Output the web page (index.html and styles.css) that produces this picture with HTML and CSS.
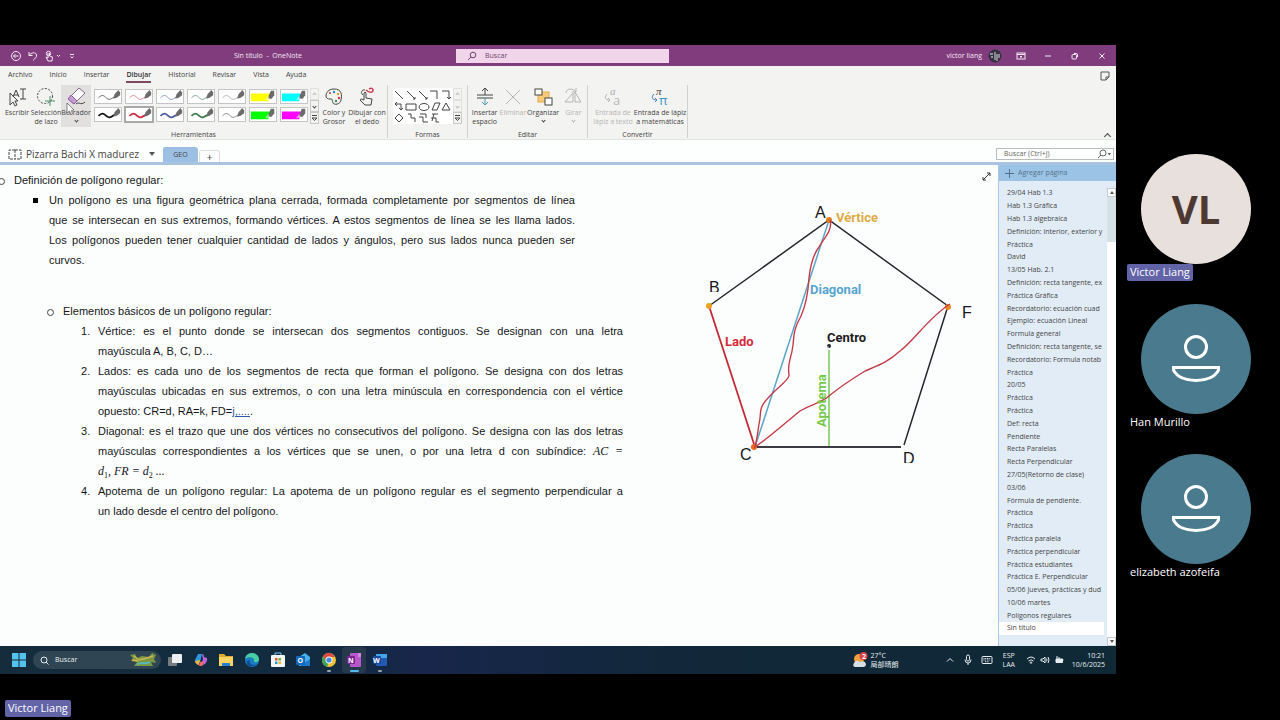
FILE: index.html
```html
<!DOCTYPE html>
<html lang="es">
<head>
<meta charset="utf-8">
<title>Sin título - OneNote</title>
<link rel="stylesheet" href="styles.css">
</head>
<body>
<svg class="defs" aria-hidden="true">
  <symbol id="wave" viewBox="0 0 28 15"><path d="M3 9C7 5 9 6 12 9S17 11 21 8" fill="none" stroke="currentColor"/><path d="M20 10L21.500 5L26 0L28 3V6L24 9Z" fill="#6b6b6b" stroke="none"/></symbol>
  <symbol id="marker" viewBox="0 0 28 15"><path d="M0 4H22L20 13H0Z" fill="currentColor"/><path d="M20 8L23 1H27V6L24 10H20Z" fill="#6b6b6b"/><path d="M16 12L20 7L22 11Z" fill="#fff" opacity=".5"/></symbol>
  <symbol id="person" viewBox="0 0 50 50"><circle cx="25" cy="13" r="10.500"/><path d="M2.500 33.500H47.500V36C44 43 35 46.500 25 46.500S6 43 2.500 36Z"/></symbol>
</svg>
<div class="call">
<main class="shared">
  <header class="titlebar">
    <div class="quick">
      <button aria-label="Atrás"><svg width="12" height="12" viewBox="0 0 12 12"><circle cx="6" cy="6" r="4.500"/><path d="M8.500 6H3.500M5.500 4L3.500 6L5.500 8"/></svg></button>
      <button aria-label="Deshacer"><svg width="12" height="12" viewBox="0 0 12 12"><path d="M2 2V5.500H5.500M2 5.500C4 2.500 9 1.500 9.500 5C10 7 8 8.500 6 10.500"/></svg></button>
      <button aria-label="Modo táctil"><svg width="18" height="12" viewBox="0 0 18 12"><circle cx="4.500" cy="3.500" r="2.200"/><path d="M4 3V8L2 7L4 11H8L8.500 7L5.500 6V3"/><path d="M13 5L14.500 6.500L16 5"/></svg></button>
      <button aria-label="Personalizar"><svg width="10" height="12" viewBox="0 0 10 12"><path d="M3 4.500H7M3.500 6.500L5 8L6.500 6.500"/></svg></button>
    </div>
    <h1 class="wintitle">Sin título &nbsp;-&nbsp; OneNote</h1>
    <label class="winsearch"><svg width="10" height="10" viewBox="0 0 10 10"><circle cx="6" cy="4" r="2.800"/><path d="M4 6L1 9"/></svg><input type="search" aria-label="Buscar" placeholder="Buscar"></label>
    <div class="account"><span>victor liang</span><svg class="face" width="14" height="14" viewBox="0 0 14 14"><circle cx="7" cy="7" r="6.500" fill="#333142"/><path d="M2 5H5M3 8H5M7 3V11M9 5V12M11 5V9" stroke="#b8b3bc" stroke-width="1.300"/></svg></div>
    <div class="winbuttons">
      <button aria-label="Cinta"><svg width="10" height="10" viewBox="0 0 10 10"><rect x="1" y="2" width="8" height="6"/><path d="M1 3.500H9M5 7V5M4 6L5 5L6 6"/></svg></button>
      <button aria-label="Minimizar"><svg width="10" height="10" viewBox="0 0 10 10"><path d="M2 5H8"/></svg></button>
      <button aria-label="Restaurar"><svg width="10" height="10" viewBox="0 0 10 10"><rect x="2" y="3.500" width="4.500" height="4.500" rx="1"/><path d="M4 2.500H6.500Q7.500 2.500 7.500 3.500V6"/></svg></button>
      <button aria-label="Cerrar"><svg width="10" height="10" viewBox="0 0 10 10"><path d="M2.500 2.500L7.500 7.500M7.500 2.500L2.500 7.500"/></svg></button>
    </div>
  </header>
  <section class="ribbon">
    <nav class="tabs">
      <button>Archivo</button><button>Inicio</button><button>Insertar</button><button class="on">Dibujar</button><button>Historial</button><button>Revisar</button><button>Vista</button><button>Ayuda</button>
      <button class="feed" aria-label="Notas"><svg width="10" height="10" viewBox="0 0 10 10"><path d="M1 1H9V6L6 9H1ZM6 9V6H9"/></svg></button>
    </nav>
    <div class="groups">
      <div class="group tools">
        <div class="items">
          <button class="tool w28"><svg width="20" height="20" viewBox="0 0 20 20"><path d="M3 6V18L6 15L8 19L10 18L8 14H11Z"/><path d="M6 10L9 3L12 10M7 8H11M13 2H19M16 2V12M13 12H19"/></svg>Escribir</button>
          <button class="tool w30"><svg width="20" height="20" viewBox="0 0 20 20"><circle cx="9" cy="9" r="7.500" stroke-dasharray="2 1.500"/><path d="M14 9V19M9 14H19" stroke="#4d9067"/></svg>Selección<br>de lazo</button>
          <button class="tool w30 hot"><svg width="20" height="20" viewBox="0 0 20 20"><path d="M2 12L13 1L19 6L8 17Z" fill="#fff" stroke="#80668a"/><path d="M2 12L5 8L11 14L8 17Z" fill="#c69bd3" stroke="#9461a5"/><path d="M10 17C13 14 14 19 19 15"/></svg>Borrador<i class="down"></i></button>
          <div class="gallery pens">
            <button aria-label="Lápiz negro fino" class="pen k1"><svg><use href="#wave"/></svg></button><button aria-label="Lápiz rojo fino" class="pen r1"><svg><use href="#wave"/></svg></button><button aria-label="Lápiz azul fino" class="pen b1"><svg><use href="#wave"/></svg></button><button aria-label="Lápiz verde fino" class="pen g1"><svg><use href="#wave"/></svg></button><button aria-label="Lápiz gris fino" class="pen n1"><svg><use href="#wave"/></svg></button><button aria-label="Resaltador amarillo" class="pen hl yy"><svg><use href="#marker"/></svg></button><button aria-label="Resaltador cian" class="pen hl cc"><svg><use href="#marker"/></svg></button>
            <button aria-label="Lápiz negro" class="pen thick k2"><svg><use href="#wave"/></svg></button><button aria-label="Lápiz rojo" class="pen thick r2 chosen"><svg><use href="#wave"/></svg></button><button aria-label="Lápiz azul" class="pen thick b2"><svg><use href="#wave"/></svg></button><button aria-label="Lápiz verde" class="pen thick g2"><svg><use href="#wave"/></svg></button><button aria-label="Lápiz gris" class="pen n2"><svg><use href="#wave"/></svg></button><button aria-label="Resaltador verde" class="pen hl gg"><svg><use href="#marker"/></svg></button><button aria-label="Resaltador magenta" class="pen hl mm"><svg><use href="#marker"/></svg></button>
          </div>
          <div class="spin"><button class="off" aria-label="Anterior"><i class="up"></i></button><button aria-label="Siguiente"><i class="down"></i></button><button aria-label="Más lápices"><svg width="7" height="8" viewBox="0 0 7 8"><path d="M1 1.500H6M1 4H6L3.500 6.500Z"/></svg></button></div>
          <button class="tool w30"><svg width="20" height="20" viewBox="0 0 20 20"><path d="M10 2C4 2 2 6 2 9S5 12 7 12S8 14 9 16S16 18 17 13S18 2 10 2Z"/><circle cx="6" cy="6" r="1" fill="#d13438" stroke="none"/><circle cx="10" cy="5" r="1.200" fill="#2b88d8" stroke="none"/><circle cx="14" cy="7" r="1.200" fill="#e0a030" stroke="none"/><circle cx="15" cy="11" r="1.200" fill="#d13438" stroke="none"/><circle cx="12" cy="14" r="1.200" fill="#3a8f5c" stroke="none"/></svg>Color y<br>Grosor</button>
          <button class="tool w36"><svg width="20" height="20" viewBox="0 0 20 20"><path d="M7 13V6Q8 4 9 6V11L15 12L14 18H8L3 13Q4 11 7 13M6 8C3 6 5 2 8 3"/><path d="M9 3C12 6 16 6 16 3C16 1 14 1 12 2" stroke="#d04052" stroke-width="1.500"/></svg>Dibujar con<br>el dedo</button>
        </div>
        <h2>Herramientas</h2>
      </div>
      <div class="group shapes">
        <div class="items">
          <button class="gallery shapebox" aria-label="Formas"><svg width="60" height="36" viewBox="0 0 60 36"><path d="M2 3L10 11M14 3L22 11M26 3L34 11M37 3H44V11M49 3H56V11M2 16H8V22M13 16H23V22H13ZM39 22L42 15H47L44 22ZM49 22L53 15L57 22ZM2 30L6 26L10 30L6 34ZM15 26H18V30H22V34M27 26H33V30M26 29H30V34H35M39 26H45M41 26L39 33M38 30H43V34H46"/><ellipse cx="31" cy="19" rx="5" ry="3.500"/><path d="M20 11H22V9M32 11H34V9M54 9L56 11L58 9M4 14L2 16L4 18M6 20L8 22L10 20" /></svg></button>
          <div class="spin"><button class="off" aria-label="Anterior"><i class="up"></i></button><button class="off" aria-label="Siguiente"><i class="down"></i></button><button aria-label="Más formas"><svg width="7" height="8" viewBox="0 0 7 8"><path d="M1 1.500H6M1 4H6L3.500 6.500Z"/></svg></button></div>
        </div>
        <h2>Formas</h2>
      </div>
      <div class="group edit">
        <div class="items">
          <button class="tool w28"><svg width="20" height="20" viewBox="0 0 20 20"><path d="M2 8H18M2 11H18M10 8V1M7 4L10 1L13 4"/><path d="M10 11V18M7 15L10 18L13 15" stroke="#4697a9"/></svg>Insertar<br>espacio</button>
          <button class="tool w28" disabled><svg width="20" height="20" viewBox="0 0 20 20"><path d="M3 3L17 17M17 3L3 17"/></svg>Eliminar</button>
          <button class="tool w32"><svg width="20" height="20" viewBox="0 0 20 20"><rect x="5" y="5" width="11" height="10" fill="#f7cb79" stroke="#e3aa45"/><rect x="2" y="2" width="7" height="6" fill="#fff"/><rect x="12" y="11" width="7" height="7" fill="#fff"/></svg>Organizar<i class="down"></i></button>
          <button class="tool w28" disabled><svg width="20" height="20" viewBox="0 0 20 20"><path d="M2 15H10V6ZM12 15V5L18 15ZM3 6C3 1 10 1 13 5M13 1V5H9"/></svg>Girar<i class="down"></i></button>
        </div>
        <h2>Editar</h2>
      </div>
      <div class="group convert">
        <div class="items">
          <button class="tool w44" disabled><svg width="20" height="20" viewBox="0 0 20 20"><text x="7" y="8" class="ia">a</text><text x="10" y="18" class="ib">a</text><path d="M4 7C1 10 2 13 7 13M5 11L7 13L5 15"/></svg>Entrada de<br>lápiz a texto</button>
          <button class="tool w50"><svg width="20" height="20" viewBox="0 0 20 20"><text x="6" y="8" class="ia dark">π</text><text x="9" y="18" class="ib blue">π</text><path d="M4 7C1 10 2 13 7 13M5 11L7 13L5 15" stroke="#4b86b8"/></svg>Entrada de lápiz<br>a matemáticas</button>
        </div>
        <h2>Convertir</h2>
      </div>
      <button class="collapse" aria-label="Contraer la cinta"><i class="up"></i></button>
      <svg class="pointer" width="9" height="14" viewBox="0 0 9 14"><path d="M1 1V11L3.500 9L5 12.500L6.500 12L5.500 8.500L8 8Z" fill="#fff" stroke="#555" stroke-width=".7"/></svg>
    </div>
  </section>
  <div class="bookbar">
    <button class="book"><svg width="14" height="12" viewBox="0 0 14 12"><path d="M7 2V11M7 2H1V11H7M7 2H13V11H7" stroke-dasharray="3 1"/></svg>Pizarra Bachi X madurez<i class="caret"></i></button>
    <button class="sect">GEO</button><button class="newsect" aria-label="Nueva sección">+</button>
    <label class="find"><input type="search" aria-label="Buscar (Ctrl+J)" placeholder="Buscar (Ctrl+J)"><svg width="14" height="10" viewBox="0 0 14 10"><circle cx="6" cy="4" r="3"/><path d="M4 6L1 9"/><path d="M10.500 4H14L12.300 6.500Z" fill="currentColor" stroke="none"/></svg></label>
  </div>
  <div class="work">
    <article class="page">
      <div class="doc">
        <ul class="lv1"><li>Definición de polígono regular:
          <ul class="lv2"><li>
            <span class="ln">Un polígono es una figura geométrica plana cerrada, formada completamente por segmentos de línea</span>
            <span class="ln">que se intersecan en sus extremos, formando vértices. A estos segmentos de línea se les llama lados.</span>
            <span class="ln">Los polígonos pueden tener cualquier cantidad de lados y ángulos, pero sus lados nunca pueden ser</span>
            <span>curvos.</span></li></ul>
        </li></ul>
        <ul class="lv3"><li>Elementos básicos de un polígono regular:
          <ol>
            <li><span class="ln">Vértice: es el punto donde se intersecan dos segmentos contiguos. Se designan con una letra</span><span>mayúscula A, B, C, D…</span></li>
            <li><span class="ln">Lados: es cada uno de los segmentos de recta que forman el polígono. Se designa con dos letras</span><span class="ln">mayúsculas ubicadas en sus extremos, o con una letra minúscula en correspondencia con el vértice</span><span>opuesto: CR=d, RA=k, FD=<u>j,....</u>.</span></li>
            <li><span class="ln">Diagonal: es el trazo que une dos vértices no consecutivos del polígono. Se designa con las dos letras</span><span class="ln">mayúsculas correspondientes a los vértices que se unen, o por una letra d con subíndice: <em>AC =</em></span><span><em>d<sub>1</sub>, FR = d<sub>2</sub> ...</em></span></li>
            <li><span class="ln">Apotema de un polígono regular: La apotema de un polígono regular es el segmento perpendicular a</span><span>un lado desde el centro del polígono.</span></li>
          </ol>
        </li></ul>
      </div>
      <svg class="figure" width="300" height="290" viewBox="690 190 300 290">
        <path d="M709 306L829 220L948 306L904 445" fill="none" stroke="#26262c" stroke-width="1.500"/>
        <path d="M755 447H901" stroke="#3c3a42" stroke-width="2"/>
        <path d="M829 220L755 447" stroke="#5ba5c8" stroke-width="1.500"/>
        <path d="M709 306L755 447" stroke="#c22a37" stroke-width="1.800"/>
        <path d="M829 350V446" stroke="#79c653" stroke-width="1.500"/>
        <circle cx="829" cy="220" r="3" fill="#dd7f21"/><circle cx="709" cy="306" r="3" fill="#eda321"/><circle cx="948" cy="307" r="3" fill="#e78b22"/><circle cx="754" cy="447" r="3" fill="#ef6a20"/>
        <circle cx="829" cy="346" r="2" fill="#222"/><circle cx="828" cy="347" r=".7" fill="#fff"/>
        <path d="M830 220C833 230 824 238 819 247C812 256 810 269 809 278C808 295 806 305 801 316C793 330 794 337 793 345C791 362 787 361 789 375C790 379 777 388 769 397C757 409 762 413 759 424C758 431 757 439 755 447C766 440 784 424 800 411C814 403 821 403 829 396C841 386 852 379 865 371C879 365 888 362 900 351C912 343 929 317 950 304" fill="none" stroke="#c43b48" stroke-width="1.400"/>
        <g class="vx"><text x="815" y="218">A</text><text x="709" y="293">B</text><text x="962" y="318">F</text><text x="740" y="460">C</text><text x="903" y="464">D</text></g>
        <path d="M708 293H722M902 464H917" stroke="#fff" stroke-width="2"/>
        <g class="lb"><text x="836" y="222" fill="#deaa43">Vértice</text><text x="810" y="294" fill="#57a4d0">Diagonal</text><text x="725" y="346" fill="#d42b3c">Lado</text><text x="827" y="342" fill="#1c1c22">Centro</text><text transform="translate(826 427) rotate(-90)" fill="#76c848">Apotema</text></g>
      </svg>
      <button class="expand" aria-label="Vista de página completa"><svg width="9" height="9" viewBox="0 0 9 9"><path d="M1 8L8 1M5 1H8V4M1 5V8H4"/></svg></button>
    </article>
    <aside class="pages">
      <button class="add"><svg width="9" height="9" viewBox="0 0 9 9"><path d="M4.500 0V9M0 4.500H9"/></svg>Agregar página</button>
      <div class="listwrap">
        <ul class="list">
          <li>29/04 Hab 1.3</li><li>Hab 1.3 Gráfica</li><li>Hab 1.3 algebraica</li><li>Definición: interior, exterior y</li><li>Práctica</li><li>David</li><li>13/05 Hab. 2.1</li><li>Definición: recta tangente, ex</li><li>Práctica Gráfica</li><li>Recordatorio: ecuación cuad</li><li>Ejemplo: ecuación Lineal</li><li>Formula general</li><li>Definición: recta tangente, se</li><li>Recordatorio: Formula notab</li><li>Práctica</li><li>20/05</li><li>Práctica</li><li>Práctica</li><li>Def: recta</li><li>Pendiente</li><li>Recta Paralelas</li><li>Recta Perpendicular</li><li>27/05(Retorno de clase)</li><li>03/06</li><li>Fórmula de pendiente.</li><li>Práctica</li><li>Práctica</li><li>Práctica paralela</li><li>Práctica perpendicular</li><li>Práctica estudiantes</li><li>Práctica E. Perpendicular</li><li>05/06 Jueves, prácticas y dud</li><li>10/06 martes</li><li>Polígonos regulares</li><li class="cur">Sin título</li>
        </ul>
        <div class="scroll"><button aria-label="Subir"><i class="caret flip"></i></button><div class="thumb"></div><button aria-label="Bajar"><i class="caret"></i></button></div>
      </div>
    </aside>
  </div>
  <footer class="taskbar">
    <button class="start" aria-label="Inicio"><svg width="14" height="14" viewBox="0 0 14 14"><path d="M0 0H6.500V6.500H0ZM7.500 0H14V6.500H7.500ZM0 7.500H6.500V14H0ZM7.500 7.500H14V14H7.500Z" fill="#54c1ee" stroke="none"/></svg></button>
    <label class="tasksearch"><svg width="9" height="9" viewBox="0 0 9 9"><circle cx="4" cy="4" r="3"/><path d="M6 6L8.500 8.500"/></svg><input type="search" aria-label="Buscar en Windows" placeholder="Buscar"><svg class="art" width="28" height="14" viewBox="0 0 28 14"><path d="M1 2L6 1L8 5L13 3L20 4L23 0L27 2L25 6L27 10L22 9L24 13H5L8 9L2 8L4 5Z" fill="#799744"/><path d="M5 3L10 7L18 5L24 3M3 7L9 8" stroke="#d1b650" stroke-width="1.500"/><path d="M8 12C12 7 15 13 21 9M12 10H19" stroke="#53bcc5" stroke-width="1.500"/></svg></label>
    <div class="apps">
      <button aria-label="Vista de tareas"><svg width="16" height="16" viewBox="0 0 16 16"><rect x="1" y="5" width="9" height="9" rx="1" fill="#777d82"/><rect x="5" y="2" width="10" height="9" rx="1" fill="#eceff1"/></svg></button>
      <button aria-label="Copilot"><svg width="16" height="16" viewBox="0 0 16 16"><path d="M5 2H9L7 10L5 12Q1 11 2 8Z" fill="#2f97e0"/><path d="M9 2Q11 2 11 5L14 6Q15 8 12 12L8 14L10 7Z" fill="#bd62d8"/><path d="M2 9L7 8L6 13Q3 13 2 9Z" fill="#e8b443"/><path d="M7 10L11 9L9 14H6Z" fill="#ef6a61"/></svg></button>
      <button aria-label="Explorador"><svg width="16" height="16" viewBox="0 0 16 16"><path d="M1 2H6L8 4H15V14H1Z" fill="#e2a92f"/><path d="M1 5H15V14H1Z" fill="#fdd462"/><path d="M4 11H12V14H4Z" fill="#2583cc"/></svg></button>
      <button aria-label="Edge"><svg width="16" height="16" viewBox="0 0 16 16"><circle cx="8" cy="8" r="7" fill="#187dc5"/><path d="M1 7C2-1 14-1 15 7C15 11 10 11 10 9C11 5 4 4 1 7Z" fill="#47cda0"/><path d="M6 8C5 13 10 14 13 12C9 17 1 14 3 9Z" fill="#124f94"/></svg></button>
      <button aria-label="Tienda"><svg width="16" height="16" viewBox="0 0 16 16"><path d="M5 4V1H11V4" stroke="#7fc4f0" fill="none"/><rect x="1" y="3" width="14" height="12" rx="1" fill="#f2f4f5"/><path d="M5 6H7.500V8.500H5Z" fill="#e95427"/><path d="M8.500 6H11V8.500H8.500Z" fill="#75ae37"/><path d="M5 9.500H7.500V12H5Z" fill="#2699dd"/><path d="M8.500 9.500H11V12H8.500Z" fill="#efb830"/></svg></button>
      <button aria-label="Outlook"><svg width="16" height="16" viewBox="0 0 16 16"><path d="M4 5L10 1L15 5V14H4Z" fill="#45b4ec"/><path d="M5 14L15 7V14Z" fill="#1d78ca"/><rect x="1" y="4" width="9" height="9" rx="1" fill="#1368b8"/><text x="2.500" y="11" class="il">O</text></svg></button>
      <button class="run" aria-label="Chrome"><svg width="16" height="16" viewBox="0 0 16 16"><circle cx="8" cy="8" r="7" fill="#edc139"/><path d="M2 4Q8-3 14 5H8L5 9Z" fill="#db4b3f"/><path d="M2 4L7 12L6 15C1 13 0 8 2 4Z" fill="#3aa45b"/><circle cx="8" cy="8" r="3.500" fill="#fff"/><circle cx="8" cy="8" r="2.600" fill="#4187e8"/></svg></button>
      <button class="run active" aria-label="OneNote"><svg width="16" height="16" viewBox="0 0 16 16"><rect x="4" y="1" width="11" height="14" rx="1" fill="#b757cc"/><path d="M12 1H15V5H12Z" fill="#d884e5"/><rect x="1" y="4" width="8" height="8" rx="1" fill="#7b238f"/><text x="2" y="11" class="il">N</text></svg></button>
      <button class="run" aria-label="Word"><svg width="16" height="16" viewBox="0 0 16 16"><rect x="4" y="2" width="11" height="12" rx="1" fill="#225ab3"/><path d="M4 2H15V6H4Z" fill="#48a4e8"/><rect x="1" y="4" width="8" height="8" rx="1" fill="#174a9c"/><text x="1" y="11" class="il">W</text></svg></button>
    </div>
    <div class="weather"><svg width="16" height="18" viewBox="0 0 16 18"><circle cx="7" cy="8" r="5" fill="#f0a13a"/><path d="M3 16Q0 15 2 12Q4 8 8 11Q13 9 14 13Q14 16 11 16Z" fill="#d5dfe8"/><circle cx="11.500" cy="5" r="4" fill="#d8424e"/><text x="10" y="7.500" class="il">2</text></svg><span>27°C<br>局部晴朗</span></div>
    <div class="tray">
      <svg width="10" height="10" viewBox="0 0 10 10"><path d="M2 6.500L5 3.500L8 6.500"/></svg>
      <svg width="10" height="12" viewBox="0 0 10 12"><rect x="3.500" y="1" width="3" height="6" rx="1.500"/><path d="M2 5.500Q2 9 5 9T8 5.500M5 9V11"/></svg>
      <svg width="12" height="10" viewBox="0 0 12 10"><rect x="1" y="1.500" width="10" height="7" rx="1"/><path d="M2.500 3.500H9.500M2.500 5H9.500M4 6.800H8" stroke-dasharray="1 .7"/></svg>
    </div>
    <span class="lang">ESP<br>LAA</span>
    <div class="net">
      <svg width="10" height="10" viewBox="0 0 10 10"><path d="M1 4Q5 0 9 4M2.500 6Q5 3.500 7.500 6M4 7.500Q5 6.500 6 7.500L5 8.500Z"/></svg>
      <svg width="10" height="10" viewBox="0 0 10 10"><path d="M1 4H3L5 2V8L3 6H1ZM6.500 3.500Q7.500 5 6.500 6.500M8 2Q10 5 8 8"/></svg>
      <svg width="10" height="10" viewBox="0 0 10 10"><path d="M2 4H8.500V7.500H2ZM3 1V4M5 2V4M8.500 5H9.500" fill="#e6edf1"/></svg>
    </div>
    <time class="clock">10:21<br>10/6/2025</time>
  </footer>
  <div class="presenter"><span class="badge">Victor Liang</span></div>
</main>
<aside class="people">
  <figure><div class="avatar vl">VL</div><figcaption><span class="badge">Victor Liang</span></figcaption></figure>
  <figure><div class="avatar"><svg width="50" height="50"><use href="#person"/></svg></div><figcaption><span class="plain">Han Murillo</span></figcaption></figure>
  <figure><div class="avatar"><svg width="50" height="50"><use href="#person"/></svg></div><figcaption><span class="plain">elizabeth azofeifa</span></figcaption></figure>
</aside>
</div>
</body>
</html>
```
FILE: styles.css
```css
* { box-sizing: border-box; }
body { margin: 0; background: #000; font: 7px/10px "Open Sans", "Noto Sans", "Noto Sans CJK SC", sans-serif; color: #444; }
button, input { font: inherit; color: inherit; background: none; border: 0; padding: 0; margin: 0; min-width: 0; }
input { outline: 0; }
input::placeholder { color: inherit; opacity: 1; }
h1, h2, ul, ol, figure { margin: 0; padding: 0; font: inherit; list-style: none; }
svg { fill: none; stroke: currentColor; stroke-width: 1; flex: none; overflow: visible; }
svg text { stroke: none; }
button svg, label svg { display: block; }
.defs { position: absolute; width: 0; height: 0; }
.call { display: flex; min-height: 100vh; }
.shared { flex: 1; min-width: 0; display: flex; flex-direction: column; padding-top: 45px; }

.titlebar { display: flex; align-items: center; height: 21px; background: #803c7c; color: #f4e9f3; }
.quick { display: flex; align-items: center; gap: 5px; width: 220px; padding-left: 10px; }
.wintitle { width: 236px; padding-left: 14px; white-space: nowrap; }
.winsearch { display: flex; align-items: center; gap: 8px; width: 213px; height: 14px; padding-left: 11px; background: #f0d5eb; color: #70446d; }
.winsearch input { flex: 1; }
.account { flex: 1; display: flex; align-items: center; justify-content: flex-end; gap: 6px; }
.face { stroke: none; }
.winbuttons { display: flex; gap: 17px; padding: 0 9px 0 14px; }

.ribbon { background: #f3f3f1; border-bottom: 1px solid #e3e3e1; }
.tabs { display: flex; gap: 17px; height: 19px; padding: 0 6px 0 8px; align-items: center; }
.tabs button { height: 15px; border-bottom: 2px solid transparent; }
.tabs .on { border-color: #7d4a63; color: #333; font-weight: 600; }
.tabs .feed { margin-left: auto; height: 10px; border: 0; color: #555; }
.groups { position: relative; display: flex; height: 54px; }
.group { border-right: 1px solid #d0d0ce; margin-bottom: 1px; }
.group h2 { text-align: center; line-height: 9px; }
.items { display: flex; height: 45px; align-items: flex-start; }
.tools { width: 388px; }
.shapes { width: 80px; }
.edit { width: 120px; }
.convert { width: 100px; }
.tools .items { padding-left: 3px; }
.shapes .items { padding-left: 5px; }
.edit .items { padding-left: 3px; gap: 1px; }
.convert .items { padding-left: 3px; }
.tool { display: flex; flex-direction: column; align-items: center; height: 42px; padding-top: 2px; line-height: 9px; white-space: nowrap; }
.tool svg { margin-bottom: 1px; }
.tool:disabled { color: #b5b5b5; }
.w28 { width: 28px; } .w30 { width: 30px; } .w32 { width: 32px; } .w36 { width: 36px; } .w44 { width: 44px; } .w50 { width: 50px; }
.hot { background: #e1e0df; }
.gallery { background: #fff; }
.pens { display: grid; grid-template-columns: repeat(7, 28px); grid-template-rows: 15px 15px; gap: 3px; padding: 4px 2px 2px 3px; background: none; }
.pen { background: #fff; border: 1px solid #c5c5c5; }
.pen svg { width: 26px; height: 13px; }
.thick svg { stroke-width: 2; }
.hl svg { stroke: none; }
.chosen { outline: 1px solid #a9a9a9; border-color: #a9a9a9; }
.k1 { color: #555; } .r1 { color: #e27684; } .b1 { color: #788da9; } .g1 { color: #6f9590; } .n1 { color: #aaa; }
.k2 { color: #111; } .r2 { color: #cc2436; } .b2 { color: #4d5b9e; } .g2 { color: #3a7a4c; } .n2 { color: #777; }
.yy { color: #ff0; } .cc { color: #0ff; } .gg { color: #0f0; } .mm { color: #f0f; }
.spin { display: grid; grid-template-rows: 12px 12px 12px; width: 9px; padding-top: 3px; }
.spin button { display: grid; place-items: center; border: 1px solid #c8c8c8; }
.spin .off { color: #bbb; border-color: #e0e0e0; }
.up, .down { display: block; width: 3px; height: 3px; border: solid currentColor; border-width: 0 1px 1px 0; transform: rotate(45deg); }
.tool .down { margin-top: 2px; }
.up { transform: rotate(225deg); }
.shapebox { width: 60px; height: 36px; margin-top: 3px; }
.collapse { margin: auto 6px 0 auto; }
.collapse .up { width: 5px; height: 5px; }
.pointer { position: absolute; left: 66px; top: 17px; }
.ia { font: italic 11px "Liberation Serif", serif; fill: #aaa; }
.ib { font: 13px "Open Sans", sans-serif; fill: #bbb; }
.dark { fill: #444; } .blue { fill: #4293c5; }

.bookbar { display: flex; align-items: flex-end; height: 25px; background: #fdfefe; border-bottom: 3px solid #aac3e0; }
.book { display: flex; align-items: center; gap: 4px; width: 163px; padding: 0 0 1px 8px; font-size: 10px; line-height: 14px; white-space: nowrap; }
.caret { width: 0; height: 0; border: solid transparent; border-width: 4px 3px 0; border-top-color: #555; }
.book .caret { margin-left: 6px; }
.sect { width: 35px; height: 15px; background: #9bc0e3; border-radius: 2px 3px 0 0; }
.newsect { width: 21px; height: 12px; margin-left: 1px; border: 1px solid #ddd; border-bottom: 0; border-radius: 2px 3px 0 0; font-size: 10px; }
.find { display: flex; align-items: center; width: 118px; height: 12px; margin: 0 2px 2px auto; padding: 0 2px 0 7px; border: 1px solid #bcbcbc; color: #666; }
.find input { flex: 1; }

.work { display: flex; flex: 1; min-height: 0; }
.page { position: relative; display: flex; flex: 1; min-width: 0; background: #fcfefe; }
.doc { flex: 1; color: #161618; font: 11px/20px "Liberation Sans", Arial, sans-serif; padding-top: 5px; }
.doc li { position: relative; }
.doc span { display: block; white-space: nowrap; }
.doc .ln { text-align-last: justify; }
.lv1 { padding-left: 14px; }
.lv1 > li::before, .lv3 > li::before { content: ""; position: absolute; left: -16px; top: 8px; width: 5px; height: 5px; border: 1px solid #444; border-radius: 50%; }
.lv2 { padding-left: 35px; width: 561px; }
.lv2 > li::before { content: ""; position: absolute; left: -16px; top: 8px; width: 5px; height: 5px; background: #000; }
.lv3 { padding: 31px 0 0 63px; width: 623px; }
.lv3 ol { padding-left: 35px; counter-reset: n; }
.lv3 ol li { counter-increment: n; }
.lv3 ol li::before { content: counter(n) "."; position: absolute; left: -17px; }
.doc em { font: italic 12px/20px "Liberation Serif", serif; }
.doc sub { font-size: 8px; line-height: 1px; font-style: normal; }
.doc u { color: #2f55a5; }
.figure { margin: 25px 8px 0 0; stroke: none; }
.vx { font: 16px "Liberation Sans", sans-serif; fill: #16161c; }
.lb { font: bold 13px Roboto, sans-serif; }
.expand { position: absolute; right: 7px; top: 7px; color: #333; }
.pages { display: flex; flex-direction: column; width: 118px; background: #e1ecf6; border-left: 1px solid #a8cae6; }
.add { display: flex; align-items: center; gap: 4px; height: 16px; padding-left: 6px; background: #9bc3e5; color: #55718a; }
.listwrap { display: flex; flex: 1; }
.list { display: flex; flex-direction: column; flex: 1; min-width: 0; margin: 6px 3px 11px 0; }
.list li { display: flex; align-items: center; flex: 1; padding-left: 8px; white-space: nowrap; overflow: hidden; }
.list .cur { background: #fff; }
.scroll { display: flex; flex-direction: column; width: 9px; margin-top: 7px; background: #d6e2e5; }
.scroll button { display: grid; place-items: center; height: 9px; background: #fff; border: 1px solid #c4ccd0; }
.scroll .caret { border-width: 3px 2px 0; }
.scroll .flip { transform: rotate(180deg); }
.thumb { flex: 1; margin-top: 45px; background: #fff; }

.taskbar { display: flex; align-items: center; height: 28px; background: linear-gradient(90deg, #142c3c 0, #132b40 28%, #17264b 38%, #12283a 60%, #0f2936); color: #e6edf1; }
.start { padding: 0 7px 0 12px; }
.tasksearch { display: flex; align-items: center; gap: 6px; width: 128px; height: 18px; padding: 0 4px 0 7px; background: #2f4553; border-radius: 9px; }
.tasksearch input { flex: 1; }
.art { stroke: none; }
.apps { display: flex; justify-content: space-between; width: 229px; margin-left: 2px; }
.apps svg, .weather svg { stroke: none; }
.apps button { position: relative; display: grid; place-items: center; width: 24px; height: 26px; }
.run::after { content: ""; position: absolute; left: 10px; bottom: 1px; width: 4px; height: 2px; border-radius: 1px; background: #9aa6ae; }
.apps .active { background: #263a4b; border-radius: 3px; }
.active::after { left: 8px; width: 9px; background: #56b8ea; }
.il { font: bold 7px "Open Sans", sans-serif; fill: #fff; }
.weather { display: flex; align-items: center; gap: 2px; margin-left: auto; line-height: 9px; white-space: nowrap; }
.tray { display: flex; align-items: center; gap: 8px; margin-left: 47px; }
.lang { margin-left: 9px; text-align: center; line-height: 9px; }
.net { display: flex; gap: 4px; margin-left: 11px; }
.clock { width: 41px; margin-right: 11px; text-align: right; line-height: 9px; }
.presenter { height: 46px; padding: 26px 0 0 5px; }
.badge, .plain { display: inline-block; height: 17px; padding: 0 3px; border-radius: 2px; color: #fff; font-size: 11px; line-height: 16px; white-space: nowrap; }
.badge { background: #6264a7; }
.people { width: 164px; padding: 154px 0 0 11px; }
.people figure { height: 150px; }
.avatar { display: grid; place-items: center; width: 110px; height: 110px; margin-left: 14px; border-radius: 50%; background: #497a8d; color: #fff; }
.avatar svg { stroke-width: 3; }
.vl { background: #e8e0dc; color: #4d3932; font-size: 40px; font-weight: 700; }
```
